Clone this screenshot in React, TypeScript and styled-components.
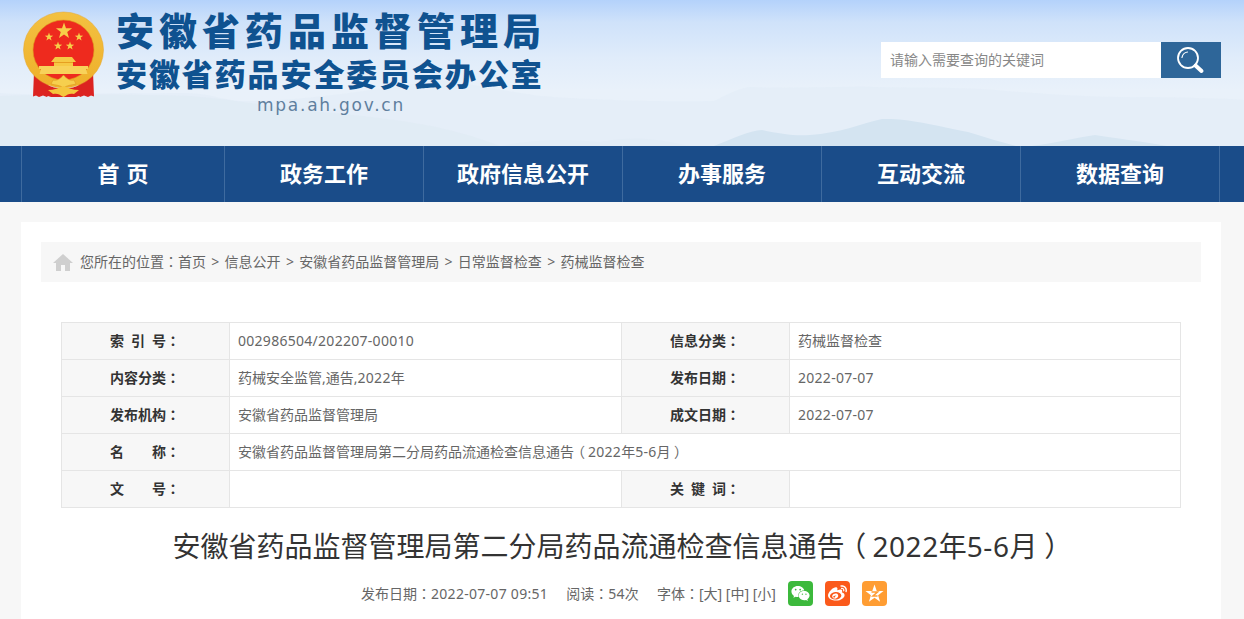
import React from "react";
import styled, { createGlobalStyle } from "styled-components";
import { FaWeibo, FaWeixin } from "react-icons/fa";

const Global = createGlobalStyle`
  html, body { margin: 0; padding: 0; height: 619px; overflow: hidden; background: #f7f7f7; }
  body { font-family: "Noto Sans", "Noto Sans CJK SC", sans-serif; color: #666; }
  #root { height: 100%; }
  * { box-sizing: border-box; }
`;

const Page = styled.div`display:flex;flex-direction:column;height:619px;`;
const Header = styled.header`
  position:relative;height:146px;flex:none;overflow:hidden;
  background:linear-gradient(180deg,#b4d2fb 0,#cfe2fa 22px,#e0ecfa 58px,#e9f1fa 90px,#e9f1f9 146px);
`;
const HeaderInner = styled.div`
  position:relative;display:flex;align-items:flex-start;height:100%;padding:0 23px 0 10px;
`;
const Scenery = styled.svg`position:absolute;left:0;top:0;width:1244px;height:146px;`;
const Emblem = styled.svg`width:110px;height:110px;flex:none;`;
const Brand = styled.div`
  display:flex;flex-direction:column;margin-left:-4px;flex:none;padding-top:6px;
  font-family:"Noto Sans CJK SC",sans-serif;color:#0f5290;font-weight:900;white-space:nowrap;
`;
const BrandTop = styled.div`font-size:38px;line-height:46px;letter-spacing:5px;`;
const BrandSub = styled.div`font-size:31px;line-height:40px;letter-spacing:1.9px;margin-top:1px;`;
const BrandUrl = styled.div`
  font-family:"DejaVu Sans",sans-serif;font-weight:400;font-size:17px;line-height:22px;
  letter-spacing:1.75px;color:#5f7f9e;margin:1px 0 0 141px;
`;
const Search = styled.form`display:flex;margin:42px 0 0 auto;height:36px;`;
const SearchInput = styled.input`
  width:280px;height:36px;border:0;padding:0 9px 2px;background:#fff;outline:0;
  font:14px "Noto Sans CJK SC",sans-serif;color:#666;
  &::placeholder{color:#888;opacity:1;}
`;
const SearchButton = styled.button`
  width:60px;height:36px;border:0;padding:0;background:#2e6699;display:flex;align-items:center;justify-content:center;
`;

const Nav = styled.nav`height:56px;flex:none;background:#1a4c89;padding-left:21px;`;
const NavList = styled.div`display:grid;grid-template-columns:203px repeat(5,199px);width:1199px;height:56px;border-right:1px solid #3f6b9f;`;
const NavItem = styled.a`
  display:flex;align-items:center;justify-content:center;height:56px;padding-bottom:4px;border-left:1px solid #3f6b9f;
  color:#fff;font:700 22px/1.4 "Noto Sans CJK SC",sans-serif;white-space:pre;word-spacing:2px;
`;

const Card = styled.main`
  flex:1;margin:20px 23px 0 21px;padding:20px 20px 0;background:#fff;overflow:hidden;
`;
const Crumbs = styled.div`
  display:flex;align-items:center;height:40px;background:#f7f7f7;padding:0 0 2px 12px;font-size:14px;color:#666;white-space:pre;
`;
const Home = styled.svg`width:20px;height:18px;margin:2px 7px 0 0;flex:none;`;
const Sep = styled.span`margin:0 5.3px;`;

const InfoTable = styled.table`
  width:1119px;margin:40px 20px 0;border-collapse:collapse;table-layout:fixed;font-size:14px;
`;
const Th = styled.td`
  height:37px;border:1px solid #e5e5e5;background:#f7f7f7;padding:0 0 2px 48px;
  font-family:"Noto Sans CJK SC",sans-serif;font-weight:700;color:#333;font-size:14px;white-space:pre;
`;
const Td = styled.td`
  height:37px;border:1px solid #e5e5e5;padding:0 8px 2px;color:#666;white-space:nowrap;
`;
const Punct = styled.span`font-family:"Noto Sans CJK TC",sans-serif;`;
const Paren = styled.span<{ $close?: boolean }>`
  display:inline-block;
  margin:${p => (p.$close ? "0 -.24em 0 .24em" : "0 .22em 0 -.22em")};
`;
const Num = styled.span`letter-spacing:.02em;`;

const Title = styled.h1`
  margin:18px 0 0;padding-right:4px;text-align:center;font-weight:400;font-size:28px;line-height:40px;color:#333;white-space:nowrap;
`;
const Meta = styled.div`
  display:flex;align-items:center;justify-content:center;gap:12px;margin:15px 0 0 6px;height:25px;font-size:14px;color:#666;white-space:pre;
`;
const MetaText = styled.span`padding-bottom:2px;`;
const Share = styled.a<{ $bg: string }>`
  width:25px;height:25px;border-radius:4px;background:${p => p.$bg};display:flex;align-items:center;justify-content:center;color:#fff;flex:none;
`;

const starPts = (cx: number, cy: number, r: number) => {
  const pts: string[] = [];
  for (let i = 0; i < 10; i++) {
    const a = -Math.PI / 2 + (i * Math.PI) / 5;
    const q = i % 2 ? r * 0.4 : r;
    pts.push(`${(cx + q * Math.cos(a)).toFixed(2)},${(cy + q * Math.sin(a)).toFixed(2)}`);
  }
  return pts.join(" ");
};

const NationalEmblem = () => (
  <Emblem viewBox="0 0 110 110">
    <defs>
      <linearGradient id="gold" x1="0" y1="0" x2="0" y2="1">
        <stop offset="0" stopColor="#f3c141" />
        <stop offset="1" stopColor="#eeb02a" />
      </linearGradient>
    </defs>
    <path d="M24 72 C27 78 32 82 38 84 L41 92 L37 97 L33 95.5 L29 97 L26 95.5 L23 96.5 Z" fill="#dc2320" />
    <path d="M83 72 C80 78 75 82 69 84 L66 92 L70 97 L74 95.5 L78 97 L81 95.5 L84 96.5 Z" fill="#dc2320" />
    <path d="M36 84 C45 90 62 90 71 84 L72 95 L66 97 H41 L35 95 Z" fill="#dc2320" />
    <ellipse cx="53.5" cy="50" rx="40" ry="38" fill="url(#gold)" stroke="#e6a52a" strokeWidth=".5" />
    <ellipse cx="53.5" cy="50" rx="30.5" ry="30" fill="#ee2a1e" stroke="#dd9a1e" strokeWidth=".6" />
    {[[54, 31, 8.5], [39, 37, 4.4], [48, 46, 4.4], [60, 46, 4.4], [69, 37, 4.4]].map(([x, y, r]) => (
      <polygon key={`${x}-${y}`} points={starPts(x, y, r)} fill="#f7cf49" />
    ))}
    <path d="M45 57 H62 L66 62 H63 V66 H44 V62 H41 Z" fill="#f6c945" />
    <rect x="44" y="62" width="19" height=".9" fill="#e59a1d" />
    <path d="M29 66 H78 V69 H76 L77.5 74 H29.5 L31 69 H29 Z" fill="#f8d25a" />
    <path d="M43 80 C47 81 50 79 53.5 75 C57 79 60 81 64 80 L66 84 C62 85 57 85 53.5 88 C50 85 45 85 41 84 Z" fill="#f6cf4e" stroke="#d98f1c" strokeWidth=".5" />
    <path d="M38 90 C44 90 49 88 53.5 86 C58 88 63 90 69 90 L64 94 C60 93 58 94 53.5 97 C49 94 47 93 43 94 Z" fill="#f5c63d" />
  </Emblem>
);

const Mountains = () => (
  <Scenery viewBox="0 0 1244 146" preserveAspectRatio="none">
    <path d="M0 93 C40 96 90 93 135 93 C165 94 185 92 200 94 C215 96 225 100 240 101 C300 102 370 90 440 80 C470 84 500 90 540 96 C590 100 660 102 714 101 C725 96 738 88 750 87 C790 89 830 86 875 87 C920 88 960 87 995 90 C1040 94 1100 98 1150 97 C1190 98 1220 98 1244 100 V146 H0 Z" fill="#e0ebf6" opacity=".45" />
    <path d="M0 96 C60 94 130 94 190 96 C240 100 290 110 345 114 C400 120 450 126 500 146 H0 Z" fill="#e0ebf5" opacity=".85" />
    <path d="M500 146 C530 140 560 138 600 142 C630 136 655 138 690 146 Z" fill="#e2ecf6" />
    <path d="M714 146 C730 140 750 130 762 130 C780 134 795 136 810 135 C840 133 860 124 882 119 C905 118 930 124 968 132 C985 137 1000 142 1016 146 Z" fill="#d4e4f1" />
    <path d="M1032 146 C1055 143 1075 138 1095 135 C1115 138 1145 142 1167 146 Z" fill="#d7e6f2" />
  </Scenery>
);

const navItems = ["首 页", "政务工作", "政府信息公开", "办事服务", "互动交流", "数据查询"];
const crumbs = ["首页", "信息公开", "安徽省药品监督管理局", "日常监督检查", "药械监督检查"];

const App: React.FC = () => (
  <Page>
    <Global />
    <Header>
      <Mountains />
      <HeaderInner>
        <NationalEmblem />
        <Brand>
          <BrandTop>安徽省药品监督管理局</BrandTop>
          <BrandSub>安徽省药品安全委员会办公室</BrandSub>
          <BrandUrl>mpa.ah.gov.cn</BrandUrl>
        </Brand>
        <Search onSubmit={e => e.preventDefault()}>
          <SearchInput placeholder="请输入需要查询的关键词" />
          <SearchButton aria-label="搜索">
            <svg width="28" height="28" viewBox="0 0 28 28" fill="none">
              <circle cx="11" cy="12" r="10" stroke="#fff" strokeWidth="1.8" />
              <path d="M5 11.5 C5.5 8.5 7.5 6.5 10.5 6" stroke="#fff" strokeWidth="1.2" strokeLinecap="round" />
              <path d="M18.5 19.5 L24.5 25" stroke="#fff" strokeWidth="4" strokeLinecap="round" />
            </svg>
          </SearchButton>
        </Search>
      </HeaderInner>
    </Header>
    <Nav>
      <NavList>
        {navItems.map(t => <NavItem key={t}>{t}</NavItem>)}
      </NavList>
    </Nav>
    <Card>
      <Crumbs>
        <Home viewBox="0 0 20 18">
          <path d="M10 1 L20 10 H17 V18 H12 V12 H8 V18 H3 V10 H0 Z" fill="#cfcfcf" />
        </Home>
        您所在的位置<Punct>：</Punct>
        {crumbs.map((c, i) => (
          <React.Fragment key={c}>
            {i > 0 && <Sep>&gt;</Sep>}
            {c}
          </React.Fragment>
        ))}
      </Crumbs>
      <InfoTable>
        <colgroup>
          <col style={{ width: 168 }} />
          <col style={{ width: 392 }} />
          <col style={{ width: 168 }} />
          <col style={{ width: 391 }} />
        </colgroup>
        <tbody>
          <tr>
            <Th>索&ensp;引&ensp;号<Punct>：</Punct></Th>
            <Td><Num>002986504/202207-00010</Num></Td>
            <Th>信息分类<Punct>：</Punct></Th>
            <Td>药械监督检查</Td>
          </tr>
          <tr>
            <Th>内容分类<Punct>：</Punct></Th>
            <Td>药械安全监管,通告,<Num>2022</Num>年</Td>
            <Th>发布日期<Punct>：</Punct></Th>
            <Td><Num>2022-07-07</Num></Td>
          </tr>
          <tr>
            <Th>发布机构<Punct>：</Punct></Th>
            <Td>安徽省药品监督管理局</Td>
            <Th>成文日期<Punct>：</Punct></Th>
            <Td><Num>2022-07-07</Num></Td>
          </tr>
          <tr>
            <Th>名&emsp;&emsp;称<Punct>：</Punct></Th>
            <Td colSpan={3}>安徽省药品监督管理局第二分局药品流通检查信息通告<Paren>（</Paren><Num>2022</Num>年<Num>5-6</Num>月<Paren $close>）</Paren></Td>
          </tr>
          <tr>
            <Th>文&emsp;&emsp;号<Punct>：</Punct></Th>
            <Td />
            <Th>关&ensp;键&ensp;词<Punct>：</Punct></Th>
            <Td />
          </tr>
        </tbody>
      </InfoTable>
      <Title>安徽省药品监督管理局第二分局药品流通检查信息通告<Paren>（</Paren><Num>2022</Num>年<Num>5-6</Num>月<Paren $close>）</Paren></Title>
      <Meta>
        <MetaText>发布日期<Punct>：</Punct><Num>2022-07-07 09:51</Num>     阅读<Punct>：</Punct><Num>54</Num>次     字体<Punct>：</Punct>[大] [中] [小]</MetaText>
        <Share $bg="#3cb93c"><FaWeixin size={19} /></Share>
        <Share $bg="#fb5a1b"><FaWeibo size={19} /></Share>
        <Share $bg="#ff9d33">
          <svg width="19" height="19" viewBox="0 0 19 19">
            <polygon points={starPts(9.5, 10, 9.5)} fill="#fff" />
            <path d="M6.5 8 H12.5 L8 12 H12.5" fill="none" stroke="#ff9d33" strokeWidth="1.6" />
          </svg>
        </Share>
      </Meta>
    </Card>
  </Page>
);

export default App;
